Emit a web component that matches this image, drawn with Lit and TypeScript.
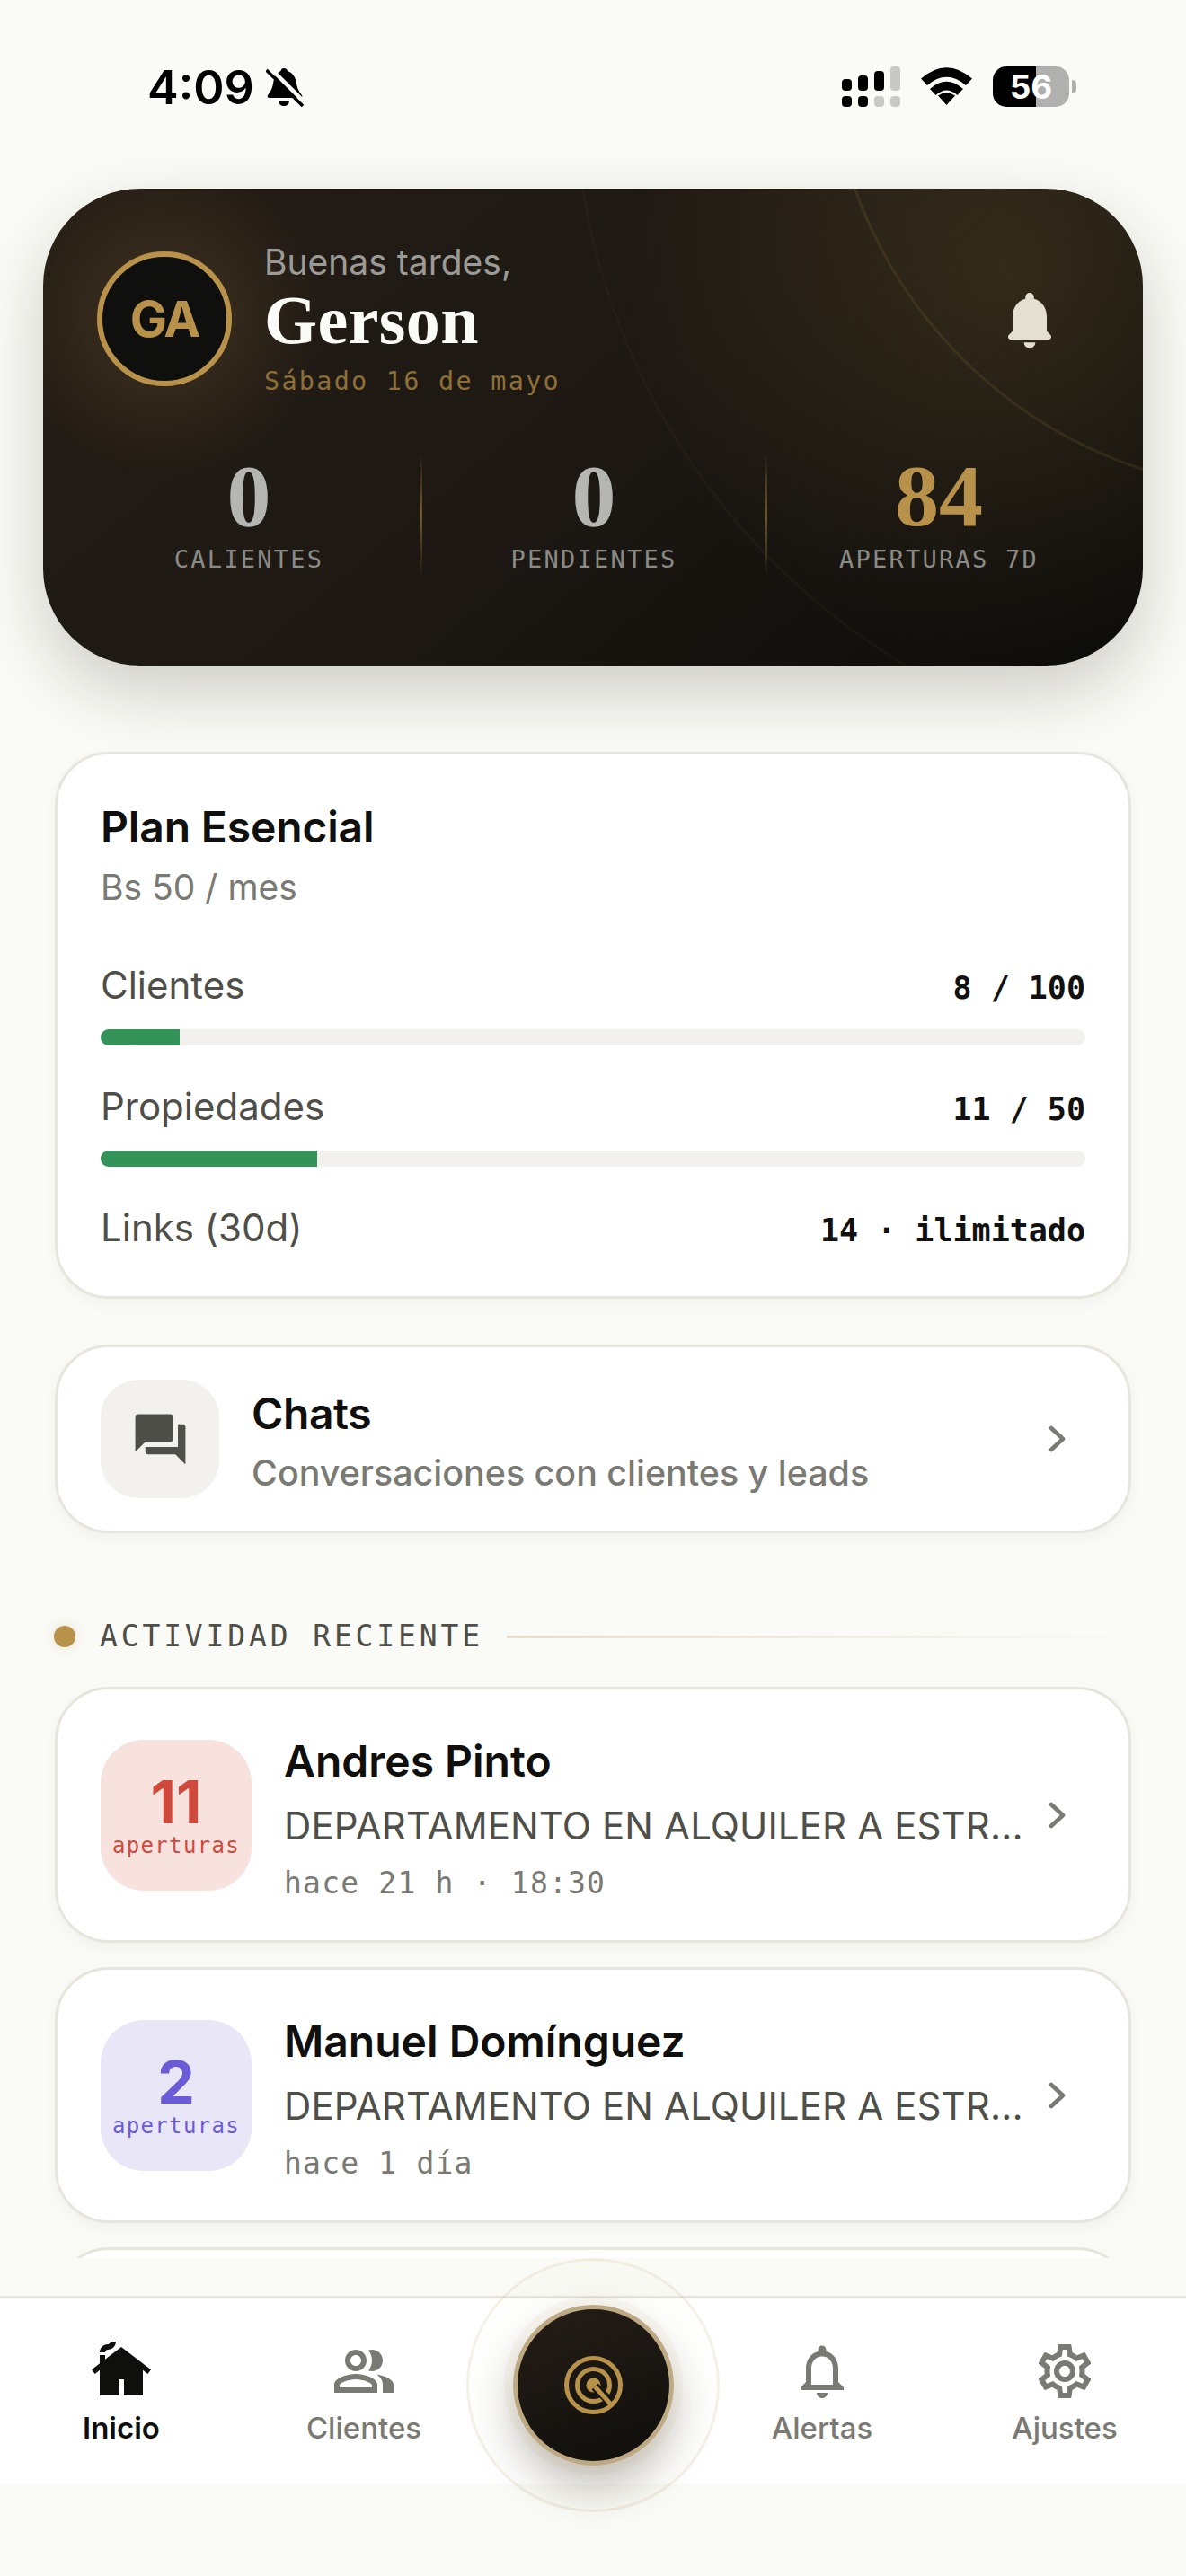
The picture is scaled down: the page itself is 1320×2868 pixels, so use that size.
import { LitElement, html, css } from 'lit';
import { customElement } from 'lit/decorators.js';
import { map } from 'lit/directives/map.js';

const chevron = html`<svg class="chev" viewBox="0 0 19 30" fill="none" stroke="currentColor" stroke-width="4.6" stroke-linecap="round" stroke-linejoin="round"><path d="M3 3l13 12L3 27"/></svg>`;

const navItems = [
  {
    label: 'Inicio',
    active: true,
    icon: 'M12,3L6,7.58V6H4v3.11L1,11.4l1.21,1.59L4,11.62V21h7v-6h2v6h7v-9.38l1.79,1.36L23,11.4L12,3z M10,1c0,1.66-1.34,3-3,3 C6.45,4,6,4.45,6,5H4c0-1.66,1.34-3,3-3c0.55,0,1-0.45,1-1H10z'
  },
  {
    label: 'Clientes',
    icon: 'M16.67 13.13C18.04 14.06 19 15.32 19 17v3h4v-3c0-2.18-3.57-3.47-6.33-3.87zM15 12c2.21 0 4-1.79 4-4s-1.79-4-4-4c-.47 0-.91.1-1.33.24C14.5 5.27 15 6.58 15 8s-.5 2.73-1.33 3.76c.42.14.86.24 1.33.24zM9 12c2.21 0 4-1.79 4-4s-1.79-4-4-4-4 1.79-4 4 1.79 4 4 4zm0-6c1.1 0 2 .9 2 2s-.9 2-2 2-2-.9-2-2 .9-2 2-2zM9 13c-2.67 0-8 1.34-8 4v3h16v-3c0-2.66-5.33-4-8-4zm6 5H3v-.99C3.2 16.29 6.3 15 9 15s5.8 1.29 6 2z'
  },
  { spacer: true },
  {
    label: 'Alertas',
    icon: 'M12 22c1.1 0 2-.9 2-2h-4c0 1.1.9 2 2 2zm6-6v-5c0-3.07-1.63-5.64-4.5-6.32V4c0-.83-.67-1.5-1.5-1.5s-1.5.67-1.5 1.5v.68C7.64 5.36 6 7.92 6 11v5l-2 2v1h16v-1l-2-2zm-2 1H8v-6c0-2.48 1.51-4.5 4-4.5s4 2.02 4 4.5v6z'
  },
  {
    label: 'Ajustes',
    icon: 'M19.43 12.98c.04-.32.07-.64.07-.98 0-.34-.03-.66-.07-.98l2.11-1.65c.19-.15.24-.42.12-.64l-2-3.46c-.09-.16-.26-.25-.44-.25-.06 0-.12.01-.17.03l-2.49 1c-.52-.4-1.08-.73-1.69-.98l-.38-2.65C14.46 2.18 14.25 2 14 2h-4c-.25 0-.46.18-.49.42l-.38 2.65c-.61.25-1.17.59-1.69.98l-2.49-1c-.06-.02-.12-.03-.18-.03-.17 0-.34.09-.43.25l-2 3.46c-.13.22-.07.49.12.64l2.11 1.65c-.04.32-.07.65-.07.98 0 .33.03.66.07.98l-2.11 1.65c-.19.15-.24.42-.12.64l2 3.46c.09.16.26.25.44.25.06 0 .12-.01.17-.03l2.49-1c.52.4 1.08.73 1.69.98l.38 2.65c.03.24.24.42.49.42h4c.25 0 .46-.18.49-.42l.38-2.65c.61-.25 1.17-.59 1.69-.98l2.49 1c.06.02.12.03.18.03.17 0 .34-.09.43-.25l2-3.46c.12-.22.07-.49-.12-.64l-2.11-1.65zm-1.98-1.71c.04.31.05.52.05.73 0 .21-.02.43-.05.73l-.14 1.13.89.7 1.08.84-.7 1.21-1.27-.51-1.04-.42-.9.68c-.43.32-.84.56-1.25.73l-1.06.43-.16 1.13-.2 1.35h-1.4l-.19-1.35-.16-1.13-1.06-.43c-.43-.18-.83-.41-1.23-.71l-.91-.7-1.06.43-1.27.51-.7-1.21 1.08-.84.89-.7-.14-1.13c-.03-.31-.05-.54-.05-.74s.02-.43.05-.73l.14-1.13-.89-.7-1.08-.84.7-1.21 1.27.51 1.04.42.9-.68c.43-.32.84-.56 1.25-.73l1.06-.43.16-1.13.2-1.35h1.39l.19 1.35.16 1.13 1.06.43c.43.18.83.41 1.23.71l.91.7 1.06-.43 1.27-.51.7 1.21-1.07.85-.89.7.14 1.13zM12 8c-2.21 0-4 1.79-4 4s1.79 4 4 4 4-1.79 4-4-1.79-4-4-4zm0 6c-1.1 0-2-.9-2-2s.9-2 2-2 2 .9 2 2-.9 2-2 2z'
  }
];

const stats = [
  { value: '0', label: 'CALIENTES' },
  { value: '0', label: 'PENDIENTES' },
  { value: '84', label: 'APERTURAS 7D', gold: true }
];

const usage = [
  { label: 'Clientes', value: '8 / 100', pct: 8 },
  { label: 'Propiedades', value: '11 / 50', pct: 22 },
  { label: 'Links (30d)', value: '14 · ilimitado' }
];

const activity = [
  {
    count: '11',
    tone: 'hot',
    name: 'Andres Pinto',
    title: 'DEPARTAMENTO EN ALQUILER A ESTR...',
    meta: 'hace 21 h · 18:30'
  },
  {
    count: '2',
    tone: 'cool',
    name: 'Manuel Domínguez',
    title: 'DEPARTAMENTO EN ALQUILER A ESTR...',
    meta: 'hace 1 día'
  }
];

@customElement('app-root')
export class AppRoot extends LitElement {
  static styles = css`
    :host {
      display: block;
      position: relative;
      width: 1320px;
      height: 2868px;
      overflow: hidden;
      background: #fafaf6;
      font-family: Inter, 'Noto Sans', sans-serif;
      color: #0f0f0d;
    }
    * { box-sizing: border-box; }
    .mono { font-family: 'DejaVu Sans Mono', 'Liberation Mono', monospace; }
    .serif { font-family: 'Liberation Serif', serif; font-weight: 700; }

    .scroll { height: 2514px; overflow: hidden; }

    /* status bar */
    .status {
      display: flex;
      align-items: flex-start;
      height: 210px;
      padding: 0 122px 0 164px;
    }
    .time {
      margin-top: 68px;
      font-size: 52px;
      line-height: 60px;
      font-weight: 600;
      color: #000;
    }
    .muted-bell { width: 42px; height: 45px; margin: 75px 0 0 13px; }
    .sys { display: flex; gap: 23px; margin: 74px 0 0 auto; }
    .signal { display: block; width: 65px; height: 45px; }
    .wifi { display: block; width: 57px; height: 42px; margin-top: 1px; }
    .batt { display: flex; align-items: center; }
    .batt-body {
      width: 85px;
      height: 45px;
      border-radius: 15px;
      background: linear-gradient(90deg, #000 56.5%, #b0b0ae 56.5%);
      color: #fff;
      font-size: 37px;
      line-height: 45px;
      font-weight: 700;
      text-align: center;
    }
    .batt-cap {
      width: 5px;
      height: 15px;
      margin-left: 3px;
      border-radius: 0 5px 5px 0;
      background: #b0b0ae;
    }

    /* hero */
    .hero-wrap { margin: 0 48px; border-radius: 108px; box-shadow: 0 30px 72px rgba(40, 34, 20, 0.2); }
    .hero {
      position: relative;
      height: 531px;
      padding-top: 60px;
      border-radius: 108px;
      overflow: hidden;
      background:
        radial-gradient(circle 430px at 1075px 94px, rgba(184, 146, 74, 0.17), rgba(184, 146, 74, 0) 100%),
        radial-gradient(circle 175px at 135px 145px, rgba(184, 146, 74, 0.2), rgba(184, 146, 74, 0) 100%),
        linear-gradient(140deg, #251d16 0%, #1d1813 50%, #0c0c0a 100%);
    }
    .ring {
      position: absolute;
      border-radius: 50%;
      border: 3px solid rgba(184, 146, 74, 0.13);
    }
    .ring.a { left: 873px; top: -677px; width: 1016px; height: 1016px; }
    .ring.b { left: 589px; top: -885px; width: 1526px; height: 1526px; border-color: rgba(184, 146, 74, 0.05); }
    .head { position: relative; display: flex; align-items: flex-start; padding: 0 88px 0 60px; }
    .avatar {
      display: flex;
      align-items: center;
      justify-content: center;
      width: 150px;
      height: 150px;
      margin-top: 10px;
      flex: none;
      border-radius: 50%;
      border: 6px solid #b8924a;
      background: #0f0f0d;
      color: #b8924a;
      font-size: 55px;
      font-weight: 700;
      letter-spacing: -2px;
    }
    .hello { margin-left: 36px; }
    .greet { margin-top: -1px; font-size: 39px; line-height: 45px; color: #9b9a96; }
    .name { font-size: 76px; line-height: 84px; letter-spacing: 0.4px; color: #fafaf6; }
    .date {
      margin-top: 9px;
      font-size: 28.5px;
      line-height: 36px;
      letter-spacing: 2.25px;
      color: #8e6f38;
    }
    .hero-bell { width: 76px; height: 76px; margin: 48px 0 0 auto; fill: #e5dfd2; }
    .stats {
      position: relative;
      display: grid;
      grid-template-columns: repeat(3, 1fr);
      margin: 61px 36px 0;
    }
    .stat { position: relative; height: 138px; padding-left: 2px; text-align: center; }
    .stat + .stat::before {
      content: '';
      position: absolute;
      left: -1.5px;
      top: 0;
      bottom: 0;
      width: 3px;
      background: linear-gradient(180deg, rgba(184, 146, 74, 0), rgba(184, 146, 74, 0.55) 50%, rgba(184, 146, 74, 0));
    }
    .stat-val { font-size: 98px; line-height: 96px; color: #b5b5b2; }
    .stat-val.gold { color: #b8924a; }
    .stat-lab {
      margin-top: 6px;
      font-size: 27px;
      line-height: 34px;
      letter-spacing: 2.25px;
      color: #8a8a86;
    }

    /* cards */
    .card {
      margin: 0 61px;
      background: #fff;
      border: 3px solid #e8e5dc;
      border-radius: 60px;
      box-shadow: 0 6px 18px rgba(15, 15, 13, 0.04);
    }
    .plan { margin-top: 96px; height: 609px; padding: 48px; }
    .plan-title { font-size: 48px; line-height: 66px; font-weight: 600; letter-spacing: -0.15px; }
    .plan-sub { margin-top: 10px; font-size: 39px; line-height: 48px; color: #7a7a74; }
    .usage { margin-top: 58px; }
    .usage + .usage { margin-top: 41px; }
    .usage-line { display: flex; justify-content: space-between; align-items: baseline; height: 54px; }
    .usage-lab { font-size: 42px; line-height: 54px; color: #4f4f49; }
    .usage-val { font-size: 35px; font-weight: 700; color: #111; }
    .track { height: 18px; margin-top: 22px; border-radius: 9px; background: #f2f1ed; overflow: hidden; }
    .fill { height: 100%; background: #339359; }

    .chats {
      display: flex;
      align-items: center;
      margin-top: 51px;
      height: 210px;
      padding: 0 70px 0 48px;
    }
    .chats-ico {
      display: flex;
      align-items: center;
      justify-content: center;
      width: 132px;
      height: 132px;
      flex: none;
      border-radius: 42px;
      background: #f2f1ed;
    }
    .chats-ico svg { width: 67px; height: 67px; fill: #4f4f49; }
    .chats-text { flex: 1; margin-left: 36px; padding-top: 5px; }
    .chats-title { font-size: 48px; line-height: 58px; font-weight: 600; letter-spacing: -0.4px; }
    .chats-sub { margin-top: 13px; font-size: 39.4px; line-height: 48px; font-weight: 500; color: #7a7a74; }
    .chev { display: block; width: 19px; height: 30px; flex: none; color: #7a7a74; }

    .section { display: flex; align-items: center; height: 60px; margin: 85px 60px 0; }
    .dot {
      width: 24px;
      height: 24px;
      flex: none;
      border-radius: 50%;
      background: #b8924a;
      box-shadow: 0 0 12px rgba(184, 146, 74, 0.25);
    }
    .section-lab {
      margin-left: 27px;
      font-size: 33px;
      line-height: 40px;
      letter-spacing: 3.85px;
      color: #4f4f49;
    }
    .section-line {
      flex: 1;
      height: 3px;
      margin-left: 26px;
      background: linear-gradient(90deg, #e8dfcc, rgba(232, 223, 204, 0));
    }

    .rows { display: flex; flex-direction: column; gap: 27px; margin-top: 26px; }
    .row {
      display: flex;
      align-items: center;
      height: 285px;
      flex: none;
      padding: 0 70px 0 48px;
    }
    .badge {
      display: flex;
      flex-direction: column;
      align-items: center;
      width: 168px;
      height: 168px;
      flex: none;
      padding-top: 39px;
      border-radius: 48px;
    }
    .badge.hot { background: #f8e2de; color: #d0493d; }
    .badge.cool { background: #e9e6f8; color: #6b5bd6; }
    .badge-num { font-size: 66px; line-height: 60px; font-weight: 700; }
    .badge-lab { margin-top: 4px; font-size: 24px; line-height: 30px; letter-spacing: 1.35px; }
    .row-text { flex: 1; min-width: 0; margin: 0 26px 0 36px; align-self: flex-start; padding-top: 50px; }
    .row-name { font-size: 48px; line-height: 60px; font-weight: 600; }
    .row-title {
      margin-top: 16px;
      font-size: 42px;
      line-height: 52px;
      letter-spacing: 0.12px;
      color: #4f4f49;
      white-space: nowrap;
    }
    .row-meta { margin-top: 17px; font-size: 33px; line-height: 42px; letter-spacing: 1.2px; color: #7a7a74; }

    /* bottom nav */
    .nav {
      position: absolute;
      left: 0;
      right: 0;
      top: 2556px;
      display: grid;
      grid-template-columns: 270px 270px 240px 270px 270px;
      height: 210px;
      padding-top: 45px;
      background: #fff;
      border-top: 3px solid #e8e5dc;
    }
    .tab { display: flex; flex-direction: column; align-items: center; color: #7a7a74; }
    .tab.on { color: #0f0f0d; }
    .tab svg { width: 72px; height: 72px; fill: currentColor; }
    .tab-lab { margin-top: 7px; font-size: 33px; line-height: 40px; font-weight: 500; }
    .tab.on .tab-lab { font-weight: 600; }

    .fab-halo {
      position: absolute;
      left: 519px;
      top: 2514px;
      width: 282px;
      height: 283px;
      border-radius: 50%;
      border: 3px solid rgba(184, 146, 74, 0.12);
      background: rgba(184, 146, 74, 0.012);
    }
    .fab {
      position: absolute;
      left: 571px;
      top: 2566px;
      display: flex;
      align-items: center;
      justify-content: center;
      width: 179px;
      height: 179px;
      border-radius: 50%;
      border: 5.5px solid #bda983;
      background: linear-gradient(160deg, #251d16, #0f0f0d);
      box-shadow: 0 0 0 10px rgba(184, 146, 74, 0.06), 0 24px 48px rgba(40, 30, 10, 0.28);
    }
    .fab svg { width: 65px; height: 65px; }
  `;

  render() {
    return html`
      <div class="scroll">
        <div class="status">
          <div class="time">4:09</div>
          <svg class="muted-bell" viewBox="0 0 42 45">
            <path d="M20 1c-2 0-3 1-3.5 3C11 6 9 12 8 18 7 24 5 27 2 31c-1 2 0 3 2 3h34c2 0 3-1 2-3-3-4-5-7-6-13-1-7-4-12-10-14-.5-2-2-3-4-3zM14 37h12c0 4-3 6-6 6s-6-2-6-6z"/>
            <path d="M3 -1L45 41" stroke="#fafaf6" stroke-width="4.5"/>
            <path d="M0.5 3L41 43" stroke="#000" stroke-width="3.6"/>
          </svg>
          <div class="sys">
            <svg class="signal" viewBox="0 0 65 45">
              <rect x="0" y="14" width="11" height="13" rx="4"/>
              <rect x="18" y="10" width="11" height="17" rx="4"/>
              <rect x="36" y="5" width="11" height="22" rx="4"/>
              <rect x="54" y="0" width="11" height="27" rx="4" fill="#c8c9c4"/>
              <rect x="0" y="33" width="11" height="12" rx="4"/>
              <rect x="18" y="33" width="11" height="12" rx="4"/>
              <rect x="36" y="33" width="11" height="12" rx="4" fill="#c8c9c4"/>
              <rect x="54" y="33" width="11" height="12" rx="4" fill="#c8c9c4"/>
            </svg>
            <svg class="wifi" viewBox="0 0 57 42">
              <path d="M0 12.5Q28.5-12 57 12.5L50 20Q28.5 1.5 7 20z"/>
              <path d="M10 24Q28.5 7.5 47 24L40.5 31Q28.5 20 16.5 31z"/>
              <path d="M28.5 42L19 31.5Q28.5 24.5 38 31.5z"/>
            </svg>
            <div class="batt">
              <div class="batt-body">56</div>
              <div class="batt-cap"></div>
            </div>
          </div>
        </div>

        <div class="hero-wrap">
          <section class="hero">
            <div class="ring a"></div>
            <div class="ring b"></div>
            <div class="head">
              <div class="avatar">GA</div>
              <div class="hello">
                <div class="greet">Buenas tardes,</div>
                <div class="name serif">Gerson</div>
                <div class="date mono">Sábado 16 de mayo</div>
              </div>
              <svg class="hero-bell" viewBox="0 0 24 24"><path d="M12 22c1.1 0 2-.9 2-2h-4c0 1.1.9 2 2 2zm6-6v-5c0-3.07-1.64-5.64-4.5-6.32V4c0-.83-.67-1.5-1.5-1.5s-1.5.67-1.5 1.5v.68C7.63 5.36 6 7.92 6 11v5l-1.29 1.29c-.63.63-.19 1.71.7 1.71h13.17c.89 0 1.34-1.08.71-1.71L18 16z"/></svg>
            </div>
            <div class="stats">
              ${map(stats, (s) => html`
                <div class="stat">
                  <div class="stat-val serif ${s.gold ? 'gold' : ''}">${s.value}</div>
                  <div class="stat-lab mono">${s.label}</div>
                </div>
              `)}
            </div>
          </section>
        </div>

        <section class="card plan">
          <div class="plan-title">Plan Esencial</div>
          <div class="plan-sub">Bs 50 / mes</div>
          ${map(usage, (u) => html`
            <div class="usage">
              <div class="usage-line">
                <span class="usage-lab">${u.label}</span>
                <span class="usage-val mono">${u.value}</span>
              </div>
              ${u.pct !== undefined
                ? html`<div class="track"><div class="fill" style="width:${u.pct}%"></div></div>`
                : ''}
            </div>
          `)}
        </section>

        <section class="card chats">
          <div class="chats-ico">
            <svg viewBox="0 0 24 24"><path d="M21 6h-2v9H6v2c0 .55.45 1 1 1h11l4 4V7c0-.55-.45-1-1-1zm-4 6V3c0-.55-.45-1-1-1H3c-.55 0-1 .45-1 1v14l4-4h10c.55 0 1-.45 1-1z"/></svg>
          </div>
          <div class="chats-text">
            <div class="chats-title">Chats</div>
            <div class="chats-sub">Conversaciones con clientes y leads</div>
          </div>
          ${chevron}
        </section>

        <div class="section">
          <span class="dot"></span>
          <span class="section-lab mono">ACTIVIDAD RECIENTE</span>
          <span class="section-line"></span>
        </div>

        <div class="rows">
          ${map(activity, (a) => html`
            <article class="card row">
              <div class="badge ${a.tone}">
                <div class="badge-num">${a.count}</div>
                <div class="badge-lab mono">aperturas</div>
              </div>
              <div class="row-text">
                <div class="row-name">${a.name}</div>
                <div class="row-title">${a.title}</div>
                <div class="row-meta mono">${a.meta}</div>
              </div>
              ${chevron}
            </article>
          `)}
          <article class="card row"></article>
        </div>
      </div>

      <nav class="nav">
        ${map(navItems, (n) => n.spacer
          ? html`<div></div>`
          : html`
            <div class="tab ${n.active ? 'on' : ''}">
              <svg viewBox="0 0 24 24"><path d=${n.icon!}/></svg>
              <div class="tab-lab">${n.label}</div>
            </div>
          `)}
      </nav>
      <div class="fab-halo"></div>
      <div class="fab">
        <svg viewBox="0 0 65 65" fill="none" stroke="#b8924a">
          <circle cx="32.5" cy="32.5" r="30" stroke-width="5"/>
          <circle cx="32.5" cy="32.5" r="18" stroke-width="5"/>
          <circle cx="32.5" cy="32.5" r="8" fill="#b8924a" stroke="none"/>
          <path d="M34 34L47 47" stroke="#17130f" stroke-width="10"/>
          <path d="M34 34L52 54" stroke-width="5"/>
        </svg>
      </div>
    `;
  }
}
